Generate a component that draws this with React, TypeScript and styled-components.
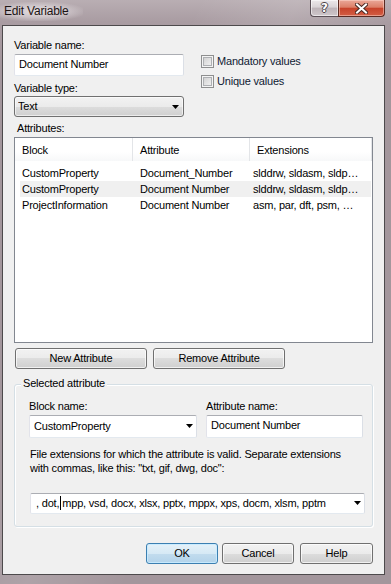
import React from "react";
import styled, { createGlobalStyle } from "styled-components";

const GlobalStyle = createGlobalStyle`
  html, body { margin: 0; padding: 0; background: #a2949b; }
  body {
    font-family: "Liberation Sans", Arial, sans-serif;
    font-size: 11px;
    letter-spacing: -0.2px;
    color: #000;
  }
`;

const Window = styled.div`
  width: 391px;
  height: 584px;
  box-sizing: border-box;
  display: flex;
  flex-direction: column;
  overflow: hidden;
  background:
    linear-gradient(115deg, rgba(255,255,255,0) 30%, rgba(255,255,255,0.12) 45%, rgba(255,255,255,0) 60%),
    linear-gradient(180deg, #b9aeb3 0px, #a99ca2 22px, #a3969c 60px, #a3969c 100%);
`;

const TitleBar = styled.div`
  height: 25px;
  flex: none;
  display: flex;
  justify-content: space-between;
  align-items: flex-start;
`;

const Title = styled.div`
  margin-top: 2px;
  padding: 0 14px 0 4px;
  height: 19px;
  line-height: 19px;
  font-size: 12px;
  letter-spacing: -0.2px;
  color: #1c1414;
  background: radial-gradient(ellipse 60% 55% at 45% 50%, rgba(236,230,233,0.85) 0%, rgba(230,224,227,0.55) 55%, rgba(230,224,227,0) 100%);
`;

const CaptionButtons = styled.div`
  display: flex;
  margin-right: 6px;
`;

const HelpCaption = styled.div`
  box-sizing: border-box;
  width: 28px;
  height: 17px;
  border: 1px solid #5b5057;
  border-top: none;
  border-right: none;
  border-radius: 0 0 0 4px;
  background: linear-gradient(180deg, #ece8ea 0%, #d9d3d6 45%, #bdb3b8 50%, #cfc7cb 100%);
  box-shadow: inset 0 0 0 1px rgba(255,255,255,0.55);
  display: flex;
  align-items: center;
  justify-content: center;
  font-family: "DejaVu Sans", sans-serif;
  font-weight: bold;
  font-size: 12px;
  letter-spacing: 0;
  color: #fff;
  text-shadow: 1px 0 0 #4a4448, -1px 0 0 #4a4448, 0 1px 0 #4a4448, 0 -1px 0 #4a4448;
`;

const CloseCaption = styled.div`
  box-sizing: border-box;
  width: 47px;
  height: 17px;
  border: 1px solid #5a2a22;
  border-top: none;
  border-radius: 0 0 4px 0;
  background: linear-gradient(180deg, #eaa898 0%, #dc7f68 45%, #c7432a 52%, #d35e45 100%);
  box-shadow: inset 0 0 0 1px rgba(255,220,210,0.5);
  display: flex;
  align-items: center;
  justify-content: center;
`;

const Client = styled.div`
  flex: 1;
  margin: 0 6px 9px 2px;
  border: 1px solid #4d4a4c;
  background: #f0f0f0;
  padding: 12px 11px 0 11px;
  display: flex;
  flex-direction: column;
`;

const TopSection = styled.div`
  display: flex;
`;

const LeftColumn = styled.div`
  width: 170px;
  display: flex;
  flex-direction: column;
`;

const Label = styled.div<{ $mt?: number; $ml?: number }>`
  height: 15px;
  line-height: 15px;
  white-space: nowrap;
  margin-top: ${(p) => p.$mt ?? 0}px;
  margin-left: ${(p) => p.$ml ?? 0}px;
`;

const TextBox = styled.div<{ $h?: number; $w?: number }>`
  box-sizing: border-box;
  height: ${(p) => p.$h ?? 22}px;
  ${(p) => (p.$w ? `width: ${p.$w}px;` : "")}
  line-height: 18px;
  padding: 0 4px 2px 4px;
  margin-top: 1px;
  background: #fff;
  border: 1px solid;
  border-color: #abadb3 #dbdfe6 #e3e9ef #e2e3ea;
  border-radius: 2px;
  white-space: nowrap;
  overflow: hidden;
`;

const DropList = styled.div`
  box-sizing: border-box;
  height: 21px;
  line-height: 19px;
  padding: 0 4px 0 3px;
  border: 1px solid #707070;
  border-radius: 3px;
  background: linear-gradient(180deg, #f2f2f2 0%, #ebebeb 50%, #dddddd 50%, #cfcfcf 100%);
  box-shadow: inset 0 0 0 1px rgba(255,255,255,0.6);
  display: flex;
  align-items: center;
`;

const ComboBox = styled.div<{ $h: number; $w: number }>`
  box-sizing: border-box;
  height: ${(p) => p.$h}px;
  width: ${(p) => p.$w}px;
  line-height: 18px;
  padding: 0 3px 1px 4px;
  margin-top: 1px;
  background: #fff;
  border: 1px solid;
  border-color: #abadb3 #dbdfe6 #e3e9ef #e2e3ea;
  border-radius: 2px;
  display: flex;
  align-items: center;
  white-space: nowrap;
  overflow: hidden;
`;

const ComboText = styled.span`
  flex: 1;
  overflow: hidden;
`;

const ArrowIcon = styled.svg`
  flex: none;
  margin-left: 4px;
`;

const Arrow = () => (
  <ArrowIcon width="7" height="4" viewBox="0 0 7 4">
    <polygon points="0,0 7,0 3.5,4" fill="#000" />
  </ArrowIcon>
);

const Caret = styled.span`
  display: inline-block;
  width: 1px;
  height: 14px;
  background: #000;
  margin: 0 1px;
  vertical-align: -3px;
`;

const Checks = styled.div`
  margin-left: 17px;
  padding-top: 16px;
  display: flex;
  flex-direction: column;
  gap: 5px;
`;

const CheckRow = styled.div`
  display: flex;
  align-items: center;
  gap: 3px;
  height: 15px;
  line-height: 15px;
  color: #0f1a33;
`;

const CheckBox = styled.span`
  box-sizing: border-box;
  width: 13px;
  height: 13px;
  border: 1px solid #8e8f8f;
  background: linear-gradient(135deg, #cbcbcb 0%, #e6e6e6 60%, #f6f6f6 100%);
  box-shadow: inset 0 0 0 1px #f4f4f4, inset 0 0 0 2px #aeb0b3;
`;

const ListView = styled.div`
  margin-top: 1px;
  height: 206px;
  box-sizing: border-box;
  border: 1px solid #828790;
  background: #fff;
  display: flex;
  flex-direction: column;
`;

const HeaderRow = styled.div`
  display: grid;
  grid-template-columns: 118px 117px 122px;
  height: 23px;
`;

const HeaderCell = styled.div`
  padding: 1px 0 0 7px;
  line-height: 22px;
  border-right: 1px solid #e3e5e8;
  background: linear-gradient(180deg, #ffffff 0%, #ffffff 60%, #f7f8f9 100%);
`;

const Rows = styled.div`
  margin-top: 4px;
  display: flex;
  flex-direction: column;
`;

const Row = styled.div<{ $hl?: boolean }>`
  display: grid;
  grid-template-columns: 118px 113px 1fr;
  margin-left: 5px;
  margin-right: 1px;
  height: 16px;
  line-height: 16px;
  background: ${(p) => (p.$hl ? "#f0f0f0" : "transparent")};
`;

const Cell = styled.div`
  padding-left: 2px;
  white-space: nowrap;
  overflow: hidden;
`;

const ButtonRow = styled.div<{ $end?: boolean; $mt: number }>`
  display: flex;
  justify-content: ${(p) => (p.$end ? "flex-end" : "flex-start")};
  margin-top: ${(p) => p.$mt}px;
  padding-left: ${(p) => (p.$end ? 0 : 1)}px;
`;

const Button = styled.div<{ $w: number; $default?: boolean; $ml?: number }>`
  box-sizing: border-box;
  width: ${(p) => p.$w}px;
  height: 21px;
  line-height: 19px;
  margin-left: ${(p) => p.$ml ?? 0}px;
  text-align: center;
  border: 1px solid ${(p) => (p.$default ? "#3c7fb1" : "#707070")};
  border-radius: 3px;
  background: ${(p) =>
    p.$default
      ? "linear-gradient(180deg, #e5f1f8 0%, #d6e9f5 50%, #c2dcee 50%, #b3d3ea 100%)"
      : "linear-gradient(180deg, #f2f2f2 0%, #ebebeb 50%, #dddddd 50%, #cfcfcf 100%)"};
  box-shadow: inset 0 0 0 1px ${(p) => (p.$default ? "rgba(200,235,255,0.9)" : "rgba(255,255,255,0.7)")};
`;

const GroupBox = styled.div`
  position: relative;
  margin-top: 15px;
  border: 1px solid #d5dfe5;
  border-radius: 3px;
  box-shadow: inset 1px 1px 0 #fff, 1px 1px 0 #fff;
  padding: 14px 9px 12px 14px;
  display: flex;
  flex-direction: column;
`;

const GroupLabel = styled.div`
  position: absolute;
  top: -9px;
  left: 6px;
  padding: 0 2px;
  background: #f0f0f0;
  line-height: 15px;
`;

const FieldRow = styled.div`
  display: flex;
  gap: 9px;
`;

const Field = styled.div<{ $w: number }>`
  width: ${(p) => p.$w}px;
  display: flex;
  flex-direction: column;
  align-items: flex-end;
  & > :first-child {
    align-self: flex-start;
  }
`;

const Note = styled.div`
  margin: 9px 0 0 1px;
  line-height: 14px;
  width: 328px;
`;

const ExtCombo = styled(ComboBox)`
  margin: 18px 0 0 1px;
  padding-left: 5px;
`;

export default function App() {
  return (
    <>
      <GlobalStyle />
      <Window>
        <TitleBar>
          <Title>Edit Variable</Title>
          <CaptionButtons>
            <HelpCaption>?</HelpCaption>
            <CloseCaption>
              <svg width="13" height="11" viewBox="0 0 13 11">
                <path d="M2 1.5 L11 9.5 M11 1.5 L2 9.5" stroke="#4a2a24" strokeWidth="4" strokeLinecap="square" />
                <path d="M2 1.5 L11 9.5 M11 1.5 L2 9.5" stroke="#ffffff" strokeWidth="2" strokeLinecap="square" />
              </svg>
            </CloseCaption>
          </CaptionButtons>
        </TitleBar>
        <Client>
          <TopSection>
            <LeftColumn>
              <Label>Variable name:</Label>
              <TextBox>Document Number</TextBox>
              <Label $mt={5}>Variable type:</Label>
              <DropList>
                <ComboText>Text</ComboText>
                <Arrow />
              </DropList>
            </LeftColumn>
            <Checks>
              <CheckRow>
                <CheckBox />
                Mandatory values
              </CheckRow>
              <CheckRow>
                <CheckBox />
                Unique values
              </CheckRow>
            </Checks>
          </TopSection>
          <Label $mt={4} $ml={3}>Attributes:</Label>
          <ListView>
            <HeaderRow>
              <HeaderCell>Block</HeaderCell>
              <HeaderCell>Attribute</HeaderCell>
              <HeaderCell>Extensions</HeaderCell>
            </HeaderRow>
            <Rows>
              <Row>
                <Cell>CustomProperty</Cell>
                <Cell>Document_Number</Cell>
                <Cell>slddrw, sldasm, sldp…</Cell>
              </Row>
              <Row $hl>
                <Cell>CustomProperty</Cell>
                <Cell>Document Number</Cell>
                <Cell>slddrw, sldasm, sldp…</Cell>
              </Row>
              <Row>
                <Cell>ProjectInformation</Cell>
                <Cell>Document Number</Cell>
                <Cell>asm, par, dft, psm, …</Cell>
              </Row>
            </Rows>
          </ListView>
          <ButtonRow $mt={5}>
            <Button $w={132}>New Attribute</Button>
            <Button $w={132} $ml={6}>Remove Attribute</Button>
          </ButtonRow>
          <GroupBox>
            <GroupLabel>Selected attribute</GroupLabel>
            <FieldRow>
              <Field $w={169}>
                <Label>Block name:</Label>
                <ComboBox $h={23} $w={168}>
                  <ComboText>CustomProperty</ComboText>
                  <Arrow />
                </ComboBox>
              </Field>
              <Field $w={158}>
                <Label>Attribute name:</Label>
                <TextBox $h={23} $w={157}>Document Number</TextBox>
              </Field>
            </FieldRow>
            <Note>
              File extensions for which the attribute is valid. Separate extensions with commas, like this: "txt, gif, dwg, doc":
            </Note>
            <ExtCombo $h={21} $w={335}>
              <ComboText>
                , dot,<Caret />mpp, vsd, docx, xlsx, pptx, mppx, xps, docm, xlsm, pptm
              </ComboText>
              <Arrow />
            </ExtCombo>
          </GroupBox>
          <ButtonRow $end $mt={16}>
            <Button $w={72} $default>OK</Button>
            <Button $w={72} $ml={4}>Cancel</Button>
            <Button $w={73} $ml={6}>Help</Button>
          </ButtonRow>
        </Client>
      </Window>
    </>
  );
}
